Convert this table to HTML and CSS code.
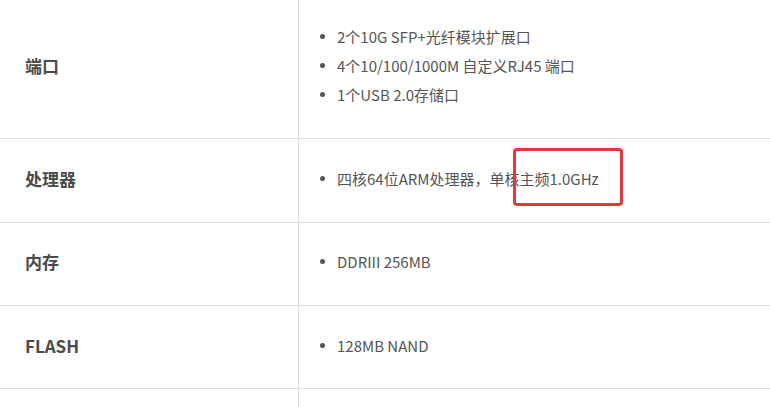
FILE: index.html
```html
<!DOCTYPE html>
<html lang="zh-CN">
<head>
    <meta charset="UTF-8">
    <title>规格参数</title>
    <link rel="stylesheet" href="styles.css">
</head>
<body>
    <div class="spec-wrap">
        <table class="spec-table">
            <tr>
                <th>端口</th>
                <td>
                    <ul>
                        <li>2个10G SFP+光纤模块扩展口</li>
                        <li>4个10/100/1000M 自定义RJ45 端口</li>
                        <li>1个USB 2.0存储口</li>
                    </ul>
                </td>
            </tr>
            <tr>
                <th>处理器</th>
                <td>
                    <ul>
                        <li>四核64位ARM处理器，单核主频1.0GHz</li>
                    </ul>
                </td>
            </tr>
            <tr>
                <th>内存</th>
                <td>
                    <ul>
                        <li>DDRIII 256MB</li>
                    </ul>
                </td>
            </tr>
            <tr>
                <th>FLASH</th>
                <td>
                    <ul>
                        <li>128MB NAND</li>
                    </ul>
                </td>
            </tr>
            <tr>
                <th></th>
                <td>
                    <ul>
                        <li>&nbsp;</li>
                    </ul>
                </td>
            </tr>
        </table>
        <!-- 标注框 -->
        <div class="mark"></div>
    </div>
</body>
</html>
```

FILE: styles.css
```css
/* 规格表 */
body {
    margin: 0;
    background: #fff;
    font-family: "Noto Sans CJK SC", "Liberation Sans", sans-serif;
    color: #555;
    overflow: hidden;
}
.spec-wrap {
    position: relative;
}
.spec-table {
    width: 100%;
    margin-top: -3px;
    border-collapse: collapse;
}
.spec-table th,
.spec-table td {
    padding: 24.5px 0 28.5px;
    border-bottom: 1px solid #dedede;
    vertical-align: middle;
    text-align: left;
}
.spec-table th {
    width: 273px;
    padding-left: 25px;
    border-right: 1px solid #dedede;
    font-size: 17px;
    font-weight: bold;
    color: #4a4a4a;
}
.spec-table td {
    padding-left: 38px;
    font-size: 15px;
}
.spec-table ul {
    margin: 0;
    padding: 0;
    list-style: none;
}
.spec-table li {
    position: relative;
    line-height: 29.4px;
}
.spec-table li::before {
    content: "";
    position: absolute;
    left: -17px;
    top: 12px;
    width: 5px;
    height: 5px;
    border-radius: 50%;
    background: #555;
}
.mark {
    position: absolute;
    left: 513px;
    top: 151px;
    width: 104px;
    height: 52px;
    border: 3px solid #e8343b;
    border-radius: 4px;
}
```
